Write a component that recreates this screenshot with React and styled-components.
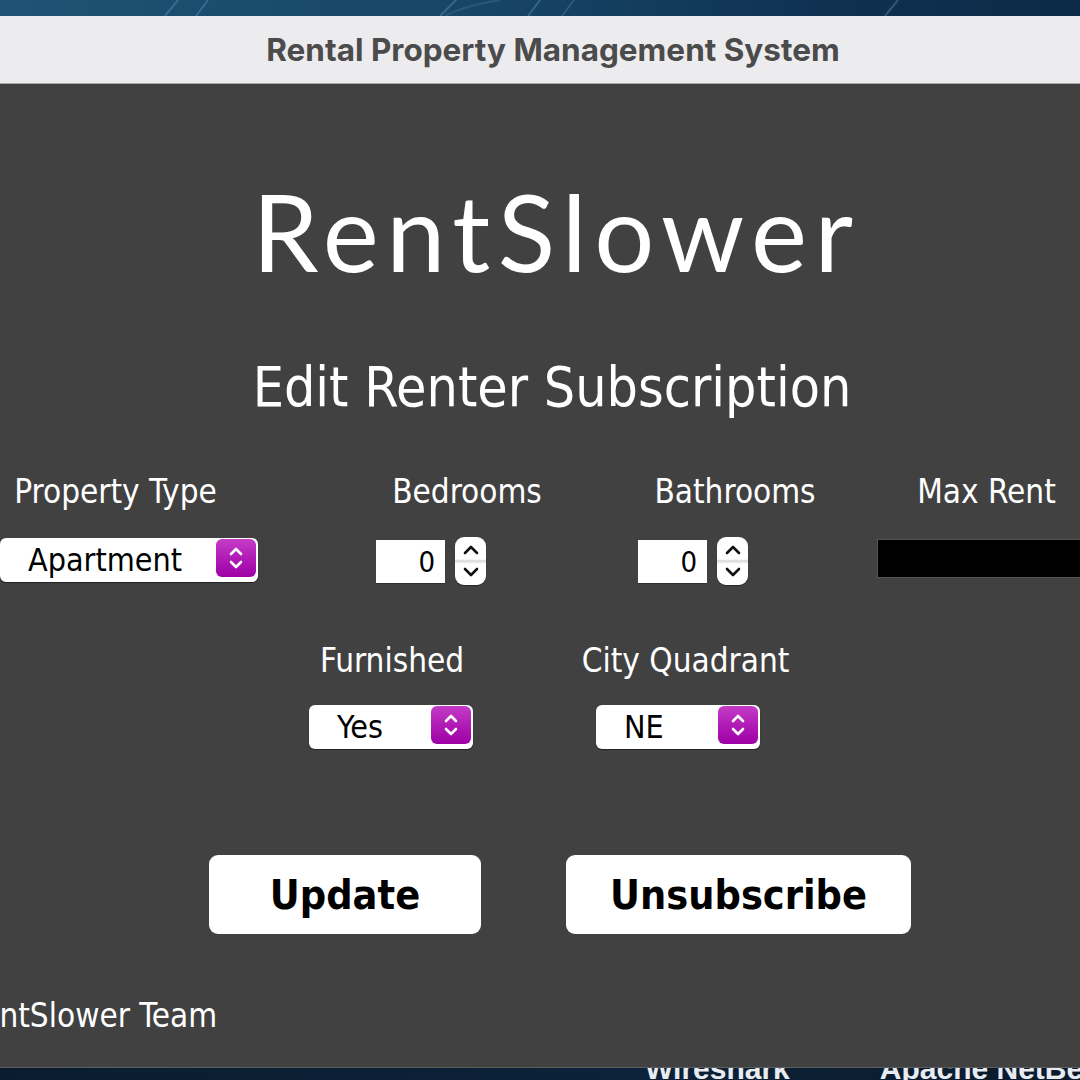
import React from "react";
import styled, { createGlobalStyle } from "styled-components";

const Global = createGlobalStyle`
  html, body {
    margin: 0;
    padding: 0;
    background: #0b1f33;
    overflow: hidden;
  }
`;

const uiFont = `"DejaVu Sans Condensed", "DejaVu Sans", sans-serif`;

const Screen = styled.div`
  width: 1080px;
  height: 1080px;
  display: flex;
  flex-direction: column;
  overflow: hidden;
`;

const DesktopTop = styled.div`
  height: 16px;
  flex-shrink: 0;
  background: linear-gradient(90deg, #1f5274 0%, #174566 45%, #0f3252 75%, #0c2a47 100%);
  svg {
    display: block;
  }
`;

const TitleBar = styled.div`
  height: 67px;
  flex-shrink: 0;
  background: #ececee;
  border-bottom: 1px solid #a6a6a6;
  display: flex;
  align-items: center;
  justify-content: center;
  padding-left: 26px;
`;

const Title = styled.div`
  font-family: Inter, "Liberation Sans", sans-serif;
  font-weight: 700;
  font-size: 31.5px;
  color: #4b4b4b;
`;

const Panel = styled.div`
  height: 983px;
  flex-shrink: 0;
  background: #414141;
  border-bottom: 1px solid #5e5e5e;
  display: flex;
  flex-direction: column;
  color: #ffffff;
`;

const Logo = styled.div`
  margin-top: 94px;
  padding-left: 33px;
  text-align: center;
  font-family: Lato, sans-serif;
  font-weight: 400;
  font-size: 106px;
  line-height: 106px;
  letter-spacing: 7.5px;
`;

const Heading = styled.div`
  margin-top: 70px;
  padding-left: 24px;
  text-align: center;
  font-family: ${uiFont};
  font-stretch: condensed;
  font-size: 55px;
  line-height: 66px;
`;

const Row = styled.div`
  display: flex;
  align-items: flex-start;
  margin-top: ${(p) => p.$top}px;
`;

const Label = styled.div`
  flex-shrink: 0;
  width: 220px;
  margin-left: ${(p) => p.$ml}px;
  text-align: center;
  font-family: ${uiFont};
  font-stretch: condensed;
  font-size: 33px;
  line-height: 40px;
  white-space: nowrap;
`;

const Combo = styled.div`
  flex-shrink: 0;
  box-sizing: border-box;
  width: ${(p) => p.$w}px;
  height: 44px;
  margin-left: ${(p) => p.$ml}px;
  margin-top: ${(p) => p.$mt || 0}px;
  background: #ffffff;
  border-radius: 6px;
  box-shadow: 0 1px 1px rgba(0, 0, 0, 0.45);
  display: flex;
  align-items: flex-start;
  justify-content: space-between;
  padding: 1px 2px 0 28px;
`;

const ComboText = styled.span`
  font-family: ${uiFont};
  font-stretch: condensed;
  font-size: 32px;
  line-height: 43px;
  color: #000000;
`;

const PopupKnob = styled.div`
  width: 40px;
  height: 38px;
  border-radius: 6px;
  background: linear-gradient(180deg, #c43cc6 0%, #b01cb6 50%, #9e00a6 100%);
  display: flex;
  align-items: center;
  justify-content: center;
`;

const Spinner = styled.div`
  flex-shrink: 0;
  display: flex;
  align-items: flex-start;
  gap: 10px;
  margin-left: ${(p) => p.$ml}px;
`;

const NumField = styled.div`
  box-sizing: border-box;
  width: ${(p) => p.$w}px;
  height: 43px;
  margin-top: 3px;
  padding: 1px 10px 0 0;
  background: #ffffff;
  box-shadow: 0 1px 0 rgba(0, 0, 0, 0.25);
  text-align: right;
  font-family: ${uiFont};
  font-size: 29px;
  line-height: 42px;
  color: #000000;
`;

const Stepper = styled.div`
  width: 31px;
  height: 48px;
  border-radius: 9px;
  background: linear-gradient(180deg, #ffffff 0%, #ffffff 46%, #d6d6d6 50%, #ffffff 56%, #ffffff 100%);
  box-shadow: 0 1px 1px rgba(0, 0, 0, 0.4);
  display: flex;
  flex-direction: column;
  align-items: center;
  justify-content: space-between;
  padding: 7px 0;
  box-sizing: border-box;
`;

const RentField = styled.div`
  flex-shrink: 0;
  width: 230px;
  height: 39px;
  margin-left: ${(p) => p.$ml}px;
  margin-top: 2px;
  background: #000000;
  border: 1px solid #555555;
  box-sizing: border-box;
`;

const Button = styled.div`
  flex-shrink: 0;
  width: ${(p) => p.$w}px;
  height: 79px;
  margin-left: ${(p) => p.$ml}px;
  background: #ffffff;
  border-radius: 9px;
  display: flex;
  align-items: center;
  justify-content: center;
  font-family: ${uiFont};
  font-stretch: condensed;
  font-weight: 700;
  font-size: 41px;
  color: #000000;
`;

const Footer = styled.div`
  margin-top: 62px;
  margin-left: -38px;
  font-family: ${uiFont};
  font-stretch: condensed;
  font-size: 33px;
  line-height: 40px;
  white-space: nowrap;
`;

const DesktopBottom = styled.div`
  flex: 1;
  background: linear-gradient(90deg, #0a1d30 0%, #0c2238 60%, #0a1a2c 100%);
  display: flex;
  overflow: hidden;
`;

const DeskLabel = styled.div`
  flex-shrink: 0;
  margin-left: ${(p) => p.$ml}px;
  margin-top: -14px;
  font-family: "Liberation Sans", sans-serif;
  font-weight: 700;
  font-size: 30px;
  line-height: 30px;
  color: #e8ecf0;
  white-space: nowrap;
`;

const UpDown = ({ color, w = 16 }) => (
  <svg width={w} height="26" viewBox="0 0 16 26" fill="none">
    <path d="M3 9 L8 4 L13 9" stroke={color} strokeWidth="2.6" strokeLinecap="round" strokeLinejoin="round" />
    <path d="M3 17 L8 22 L13 17" stroke={color} strokeWidth="2.6" strokeLinecap="round" strokeLinejoin="round" />
  </svg>
);

const Chevron = ({ down }) => (
  <svg width="18" height="11" viewBox="0 0 18 11" fill="none">
    <path
      d={down ? "M3 2 L9 8 L15 2" : "M3 9 L9 3 L15 9"}
      stroke="#111"
      strokeWidth="2.6"
      strokeLinecap="round"
      strokeLinejoin="round"
    />
  </svg>
);

function Select({ value, w, ml, mt }) {
  return (
    <Combo $w={w} $ml={ml} $mt={mt}>
      <ComboText>{value}</ComboText>
      <PopupKnob>
        <UpDown color="#ffffff" />
      </PopupKnob>
    </Combo>
  );
}

function NumberSpinner({ ml }) {
  return (
    <Spinner $ml={ml}>
      <NumField $w={69}>0</NumField>
      <Stepper>
        <Chevron />
        <Chevron down />
      </Stepper>
    </Spinner>
  );
}

export default function App() {
  return (
    <>
      <Global />
      <Screen>
        <DesktopTop>
          <svg width="1080" height="16" viewBox="0 0 1080 16">
            <g stroke="#6aa6cc" strokeOpacity="0.35" strokeWidth="2" fill="none">
              <path d="M165 16 L178 0" />
              <path d="M196 16 L208 0" />
              <path d="M440 16 L458 -2" />
              <path d="M445 16 C460 8 475 4 500 0" strokeOpacity="0.2" />
              <path d="M528 16 L540 0" />
              <path d="M562 16 L574 0" strokeOpacity="0.25" />
              <path d="M885 16 L898 0" />
            </g>
          </svg>
        </DesktopTop>
        <TitleBar>
          <Title>Rental Property Management System</Title>
        </TitleBar>
        <Panel>
          <Logo>RentSlower</Logo>
          <Heading>Edit Renter Subscription</Heading>

          <Row $top={52}>
            <Label $ml={5.5}>Property Type</Label>
            <Label $ml={131.5}>Bedrooms</Label>
            <Label $ml={48}>Bathrooms</Label>
            <Label $ml={31.5}>Max Rent</Label>
          </Row>

          <Row $top={25}>
            <Select value="Apartment" w={258} ml={0} mt={1} />
            <NumberSpinner ml={118} />
            <NumberSpinner ml={152} />
            <RentField $ml={129} />
          </Row>

          <Row $top={56}>
            <Label $ml={282}>Furnished</Label>
            <Label $ml={73.5}>City Quadrant</Label>
          </Row>

          <Row $top={24}>
            <Select value="Yes" w={164} ml={309} />
            <Select value="NE" w={164} ml={123} />
          </Row>

          <Row $top={106}>
            <Button $w={272} $ml={209}>Update</Button>
            <Button $w={345} $ml={85}>Unsubscribe</Button>
          </Row>

          <Footer>RentSlower Team</Footer>
        </Panel>
        <DesktopBottom>
          <DeskLabel $ml={645}>Wireshark</DeskLabel>
          <DeskLabel $ml={90}>Apache NetBeans</DeskLabel>
        </DesktopBottom>
      </Screen>
    </>
  );
}
